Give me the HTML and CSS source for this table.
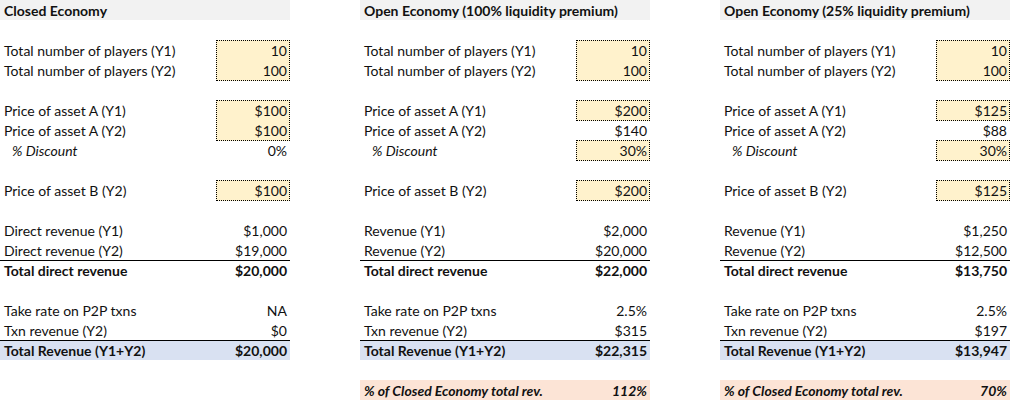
FILE: index.html
```html
<!DOCTYPE html>
<html>
<head>
<meta charset="utf-8">
<link rel="stylesheet" href="styles.css">
</head>
<body>
<div class="sheet">
  <div class="panel">
    <div class="row head"><span class="lbl">Closed Economy</span><span class="val"></span></div>
    <div class="row"></div>
    <div class="row"><span class="lbl">Total number of players (Y1)</span><span class="val input">10</span></div>
    <div class="row"><span class="lbl">Total number of players (Y2)</span><span class="val input next">100</span></div>
    <div class="row"></div>
    <div class="row"><span class="lbl">Price of asset A (Y1)</span><span class="val input">$100</span></div>
    <div class="row"><span class="lbl">Price of asset A (Y2)</span><span class="val input next">$100</span></div>
    <div class="row"><span class="lbl ital">% Discount</span><span class="val">0%</span></div>
    <div class="row"></div>
    <div class="row"><span class="lbl">Price of asset B (Y2)</span><span class="val input">$100</span></div>
    <div class="row"></div>
    <div class="row"><span class="lbl">Direct revenue (Y1)</span><span class="val">$1,000</span></div>
    <div class="row"><span class="lbl">Direct revenue (Y2)</span><span class="val">$19,000</span></div>
    <div class="row total"><span class="lbl">Total direct revenue</span><span class="val">$20,000</span></div>
    <div class="row"></div>
    <div class="row"><span class="lbl">Take rate on P2P txns</span><span class="val">NA</span></div>
    <div class="row"><span class="lbl">Txn revenue (Y2)</span><span class="val">$0</span></div>
    <div class="row total blue"><span class="lbl">Total Revenue (Y1+Y2)</span><span class="val">$20,000</span></div>
  </div>

  <div class="panel">
    <div class="row head"><span class="lbl">Open Economy (100% liquidity premium)</span><span class="val"></span></div>
    <div class="row"></div>
    <div class="row"><span class="lbl">Total number of players (Y1)</span><span class="val input">10</span></div>
    <div class="row"><span class="lbl">Total number of players (Y2)</span><span class="val input next">100</span></div>
    <div class="row"></div>
    <div class="row"><span class="lbl">Price of asset A (Y1)</span><span class="val input">$200</span></div>
    <div class="row"><span class="lbl">Price of asset A (Y2)</span><span class="val">$140</span></div>
    <div class="row"><span class="lbl ital">% Discount</span><span class="val input">30%</span></div>
    <div class="row"></div>
    <div class="row"><span class="lbl">Price of asset B (Y2)</span><span class="val input">$200</span></div>
    <div class="row"></div>
    <div class="row"><span class="lbl">Revenue (Y1)</span><span class="val">$2,000</span></div>
    <div class="row"><span class="lbl">Revenue (Y2)</span><span class="val">$20,000</span></div>
    <div class="row total"><span class="lbl">Total direct revenue</span><span class="val">$22,000</span></div>
    <div class="row"></div>
    <div class="row"><span class="lbl">Take rate on P2P txns</span><span class="val">2.5%</span></div>
    <div class="row"><span class="lbl">Txn revenue (Y2)</span><span class="val">$315</span></div>
    <div class="row total blue"><span class="lbl">Total Revenue (Y1+Y2)</span><span class="val">$22,315</span></div>
    <div class="row"></div>
    <div class="row pink"><span class="lbl">% of Closed Economy total rev.</span><span class="val">112%</span></div>
  </div>

  <div class="panel">
    <div class="row head"><span class="lbl">Open Economy (25% liquidity premium)</span><span class="val"></span></div>
    <div class="row"></div>
    <div class="row"><span class="lbl">Total number of players (Y1)</span><span class="val input">10</span></div>
    <div class="row"><span class="lbl">Total number of players (Y2)</span><span class="val input next">100</span></div>
    <div class="row"></div>
    <div class="row"><span class="lbl">Price of asset A (Y1)</span><span class="val input">$125</span></div>
    <div class="row"><span class="lbl">Price of asset A (Y2)</span><span class="val">$88</span></div>
    <div class="row"><span class="lbl ital">% Discount</span><span class="val input">30%</span></div>
    <div class="row"></div>
    <div class="row"><span class="lbl">Price of asset B (Y2)</span><span class="val input">$125</span></div>
    <div class="row"></div>
    <div class="row"><span class="lbl">Revenue (Y1)</span><span class="val">$1,250</span></div>
    <div class="row"><span class="lbl">Revenue (Y2)</span><span class="val">$12,500</span></div>
    <div class="row total"><span class="lbl">Total direct revenue</span><span class="val">$13,750</span></div>
    <div class="row"></div>
    <div class="row"><span class="lbl">Take rate on P2P txns</span><span class="val">2.5%</span></div>
    <div class="row"><span class="lbl">Txn revenue (Y2)</span><span class="val">$197</span></div>
    <div class="row total blue"><span class="lbl">Total Revenue (Y1+Y2)</span><span class="val">$13,947</span></div>
    <div class="row"></div>
    <div class="row pink"><span class="lbl">% of Closed Economy total rev.</span><span class="val">70%</span></div>
  </div>
</div>
</body>
</html>
```

FILE: styles.css
```css
html, body {
  margin: 0;
  padding: 0;
  background: #ffffff;
}

body {
  font-family: "Lato", "Open Sans", sans-serif;
  font-size: 14px;
  color: #111;
}

.sheet {
  display: flex;
  gap: 70px;
  width: 1010px;
  height: 402px;
  overflow: hidden;
}

.panel {
  display: flex;
  flex-direction: column;
  width: 290px;
  flex: none;
}

.row {
  display: grid;
  grid-template-columns: 216px 74px;
  height: 20px;
  box-sizing: border-box;
}

.lbl,
.val {
  padding-top: 2px;
  line-height: 18px;
  white-space: nowrap;
  box-sizing: border-box;
}

.lbl {
  padding-left: 4px;
}

.lbl.ital {
  font-style: italic;
  padding-left: 12px;
}

.val {
  text-align: right;
  padding-right: 3px;
}

.val.input {
  background: #fff2cc;
  border: 1px dotted #000;
  padding-top: 1px;
  padding-right: 2px;
}

.val.input.next {
  border-top: none;
  padding-top: 2px;
}

.head {
  background: #f2f2f2;
  font-weight: 700;
}

.total {
  border-top: 1px solid #000;
  font-weight: 700;
}

.total .lbl,
.total .val {
  padding-top: 1px;
}

.blue {
  background: #d9e1f2;
}

.pink {
  background: #fce4d6;
  font-weight: 700;
  font-style: italic;
}
```
